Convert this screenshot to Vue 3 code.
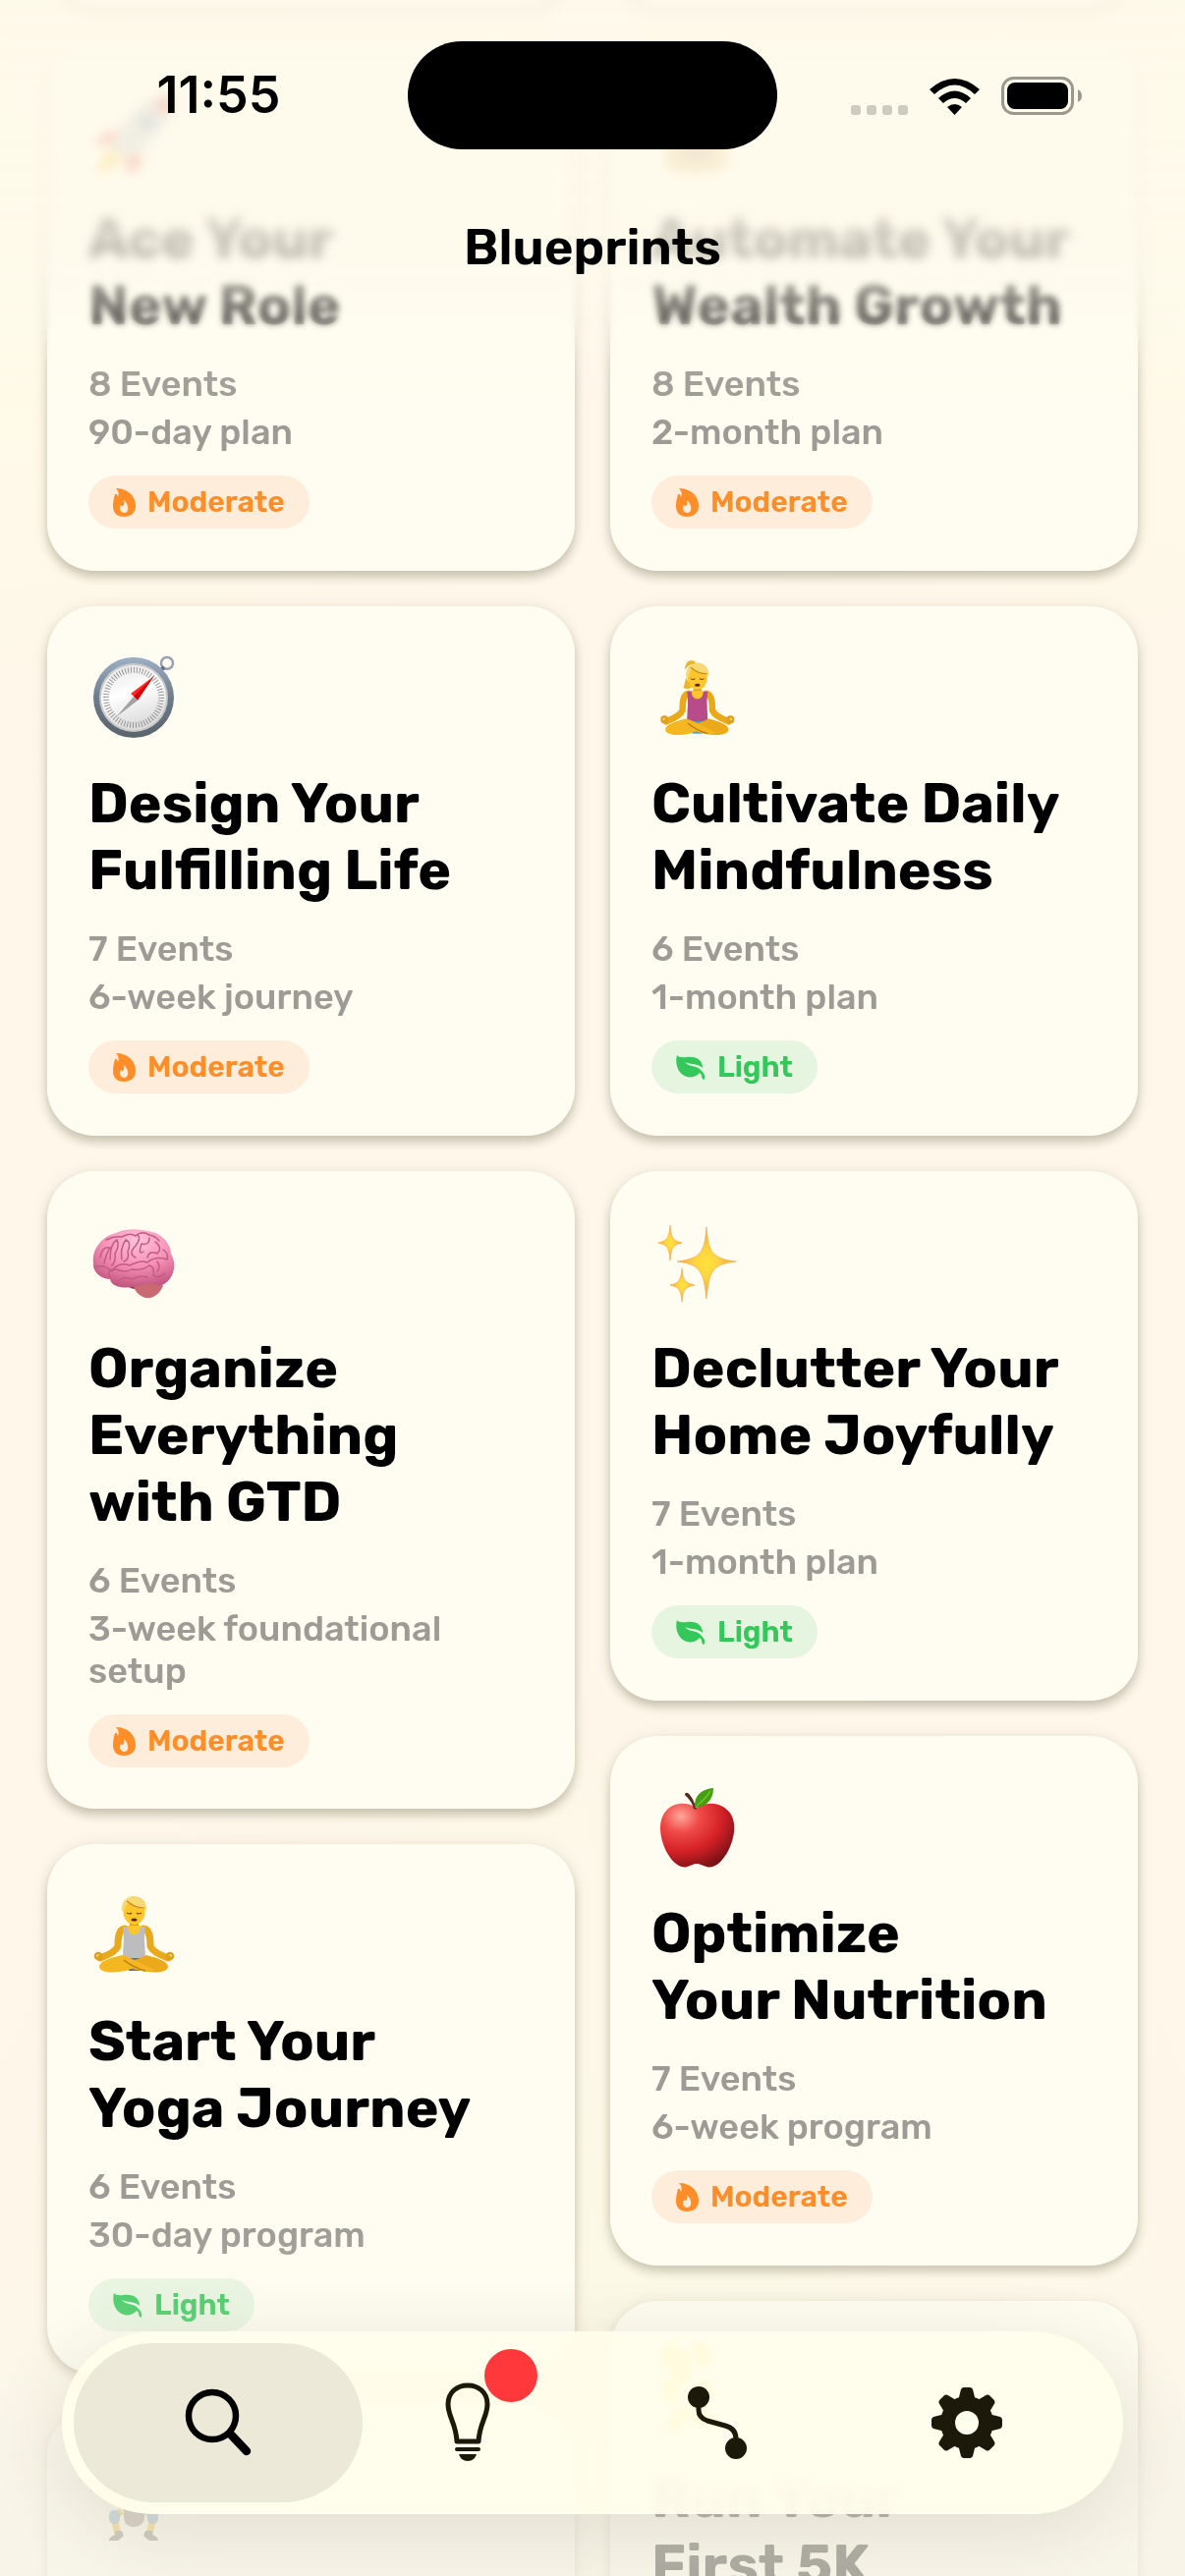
<template>
  <div class="screen">
    <main class="board">
      <div v-for="(column, columnIndex) in columns" :key="columnIndex" class="column">
        <div class="card card-past"></div>
        <article v-for="plan in column" :key="plan.emoji" class="card">
          <svg class="emoji" viewBox="0 0 102 102" aria-hidden="true">
            <!-- rocket -->
            <g v-if="plan.emoji === 'rocket'">
              <path d="M30 50 C16 48 10 56 8 64 L26 62Z M54 72 C56 84 48 90 40 93 L38 76Z" fill="#e8443a" />
              <path d="M30 66 C18 68 10 78 9 92 C22 91 34 84 36 72Z" fill="#fbc531" />
              <path d="M24 66 C30 40 54 16 86 13 C84 44 62 66 36 77Z" fill="#b9c2c9" />
              <path d="M64 21 C72 16 80 13 86 13 C86 20 84 27 80 35Z" fill="#d23b35" />
              <circle cx="60" cy="40" r="8" fill="#5b7f9b" />
            </g>

            <!-- money bag -->
            <g v-else-if="plan.emoji === 'moneybag'">
              <path d="M34 12 H58 L54 30 C70 42 82 70 76 84 Q72 92 46 92 Q18 92 15 84 C10 68 24 42 38 30Z" fill="#e2c078" />
              <path d="M34 30 H58 V36 H34Z" fill="#a9803f" />
              <circle cx="46" cy="66" r="15" fill="#b59a74" />
            </g>

            <!-- compass -->
            <g v-else-if="plan.emoji === 'compass'">
              <circle cx="80" cy="16" r="6" fill="none" stroke="#97a3b4" stroke-width="2.5" />
              <path d="M73 24 L77 20" stroke="#66717f" stroke-width="4" />
              <circle cx="46" cy="51" r="41" fill="url(#compassRim)" />
              <circle cx="46" cy="51" r="35" fill="#c9c9c9" />
              <circle cx="46" cy="51" r="33" fill="url(#compassFace)" />
              <circle cx="46" cy="51" r="28" fill="none" stroke="#8d8d8d" stroke-width="6" pathLength="240" stroke-dasharray="1.2 2.8" />
              <path d="M67 29 L43 47 L47 51Z" fill="#ff2a2a" />
              <path d="M67 29 L50 54 L46 50Z" fill="#d90000" />
              <path d="M28 71 L43 47 L47 51Z" fill="#f4f4f4" />
              <path d="M28 71 L50 54 L46 50Z" fill="#a3a3a3" />
            </g>

            <!-- lotus position, two hair styles -->
            <g
              v-else-if="plan.emoji === 'yoga-woman' || plan.emoji === 'yoga'"
              :transform="plan.emoji === 'yoga-woman' ? 'translate(4 5) scale(.92 .95)' : null"
            >
              <path d="M37 44 C30 45 30 55 30 62 C28 67 20 71 12 74" fill="none" stroke="#e8a91b" stroke-width="7" stroke-linecap="round" stroke-linejoin="round" />
              <path d="M56 44 C63 45 63 55 63 62 C65 67 73 71 81 74" fill="none" stroke="#e8a91b" stroke-width="7" stroke-linecap="round" stroke-linejoin="round" />
              <circle cx="10" cy="72" r="3" fill="none" stroke="#dfa01a" stroke-width="2.5" />
              <circle cx="83" cy="72" r="3" fill="none" stroke="#dfa01a" stroke-width="2.5" />
              <path d="M42 36 H51 V48 H42Z" fill="#e2a017" />
              <path d="M35 42 H58 C56 54 58 62 58 77 H35 C35 62 37 54 35 42Z" :fill="plan.emoji === 'yoga' ? '#bdbdbf' : '#b84c8b'" />
              <path d="M40 41 Q40 50 46.500 50 Q53 50 53 41Z" fill="#fcc62c" />
              <path d="M38 74 H55 L52 87 H41Z" :fill="plan.emoji === 'yoga' ? '#66717f' : '#45a3dc'" />
              <path d="M59 71 C70 74 81 77 81 83 C80 90 64 89 54 87 Q44 86 33 79 Q46 78 59 71Z" fill="#eca91a" />
              <path d="M34 71 C22 74 11 77 11 83 C12 90 28 89 38 87 L46 84 L60 88 L68 86 C56 82 46 74 34 71Z" fill="#f4b722" />
              <path d="M36 76 Q46 84 58 87" fill="none" stroke="#b97b10" stroke-width="1.500" />
              <ellipse cx="46.500" cy="27" rx="11" ry="13" fill="#fcc62c" />
              <path d="M34 26 C32 6 61 6 59 26 L57 24 Q48 24 41 16 Q38 20 36 27Z" fill="#f7d873" />
              <path d="M39 16 Q47 23 57 23" fill="none" stroke="#c98a1a" stroke-width="1.200" />
              <path d="M39 28 Q42 30 44 28 M49 28 Q51 30 54 28" fill="none" stroke="#7a4b0a" stroke-width="1.200" />
              <ellipse cx="46.500" cy="35" rx="3" ry="1.600" fill="#5e2710" />
              <path v-if="plan.emoji === 'yoga-woman'" d="M44 10 C37 6 32 12 33 19 Q36 12 44 12Z M34 27 Q32 34 31 38 Q37 41 40 37Z" fill="#e9b62f" />
            </g>

            <!-- brain -->
            <g v-else-if="plan.emoji === 'brain'">
              <path d="M38 73 Q44 80 50 77 L56 72Z" fill="#8d3f3f" />
              <path d="M46 76 C50 70 70 68 76 75 C72 84 65 88 58 87 C52 85 48 81 46 76Z" fill="#c96a72" />
              <path d="M5 51 C3 38 14 24 28 21 C38 16 52 17 60 19 C74 20 84 32 84 42 C91 54 86 69 75 74 C68 75 62 71 56 73 C45 78 24 79 22 68 C14 68 4 62 5 51Z" fill="url(#brainFill)" />
              <g fill="none" stroke="#c25c85" stroke-width="1.500" stroke-linecap="round">
                <path d="M6 56 Q16 52 24 60 Q30 50 42 54 Q54 48 60 51 Q68 44 80 48" />
                <path d="M22 66 Q18 58 28 58 Q38 62 44 58 Q54 60 62 54 Q68 56 66 64 Q72 68 78 62" />
                <path d="M12 46 Q14 34 22 36 Q18 42 16 52 M22 48 Q22 32 29 28 Q32 34 27 42 Q28 50 24 54" />
                <path d="M34 48 Q32 36 38 28 Q44 30 40 40 Q42 48 36 50 M48 46 Q40 42 48 34 Q54 26 50 23" />
                <path d="M56 40 Q50 44 54 32 Q62 34 62 26 M60 46 Q62 38 70 42 Q76 36 68 30 M76 38 Q82 42 80 48" />
                <path d="M18 28 Q26 24 34 25 Q42 20 48 24 Q54 18 62 23 Q68 24 72 29" />
                <path d="M30 70 Q36 64 44 68 Q52 64 60 66 M70 50 Q74 56 70 60" />
              </g>
            </g>

            <!-- sparkles -->
            <g v-else-if="plan.emoji === 'sparkles'" fill="url(#sparkFill)" stroke="#f8a94a" stroke-width="0.700">
              <path d="M56 15 C58 40 61 47 86 50 C61 53 59 60 56 88 C53 60 50 53 26 50 C51 47 54 40 56 15Z" />
              <path d="M19 13 C20 26 22 29 31 31 C22 33 20 36 19 49 C18 36 16 33 7 31 C16 29 18 26 19 13Z" />
              <path d="M31 57 C32 69 34 72 44 74 C34 76 32 79 31 91 C30 79 28 76 19 74 C28 72 30 69 31 57Z" />
            </g>

            <!-- apple -->
            <g v-else-if="plan.emoji === 'apple'">
              <path d="M46 31 C36 25 23 25 15 34 C6 44 8 62 16 77 C21 86 28 92 35 91.500 C40 90 43 88 46 88 C49 88 52 90 58 91.500 C66 92 72 85 77 77 C86 61 87 43 78 34 C69 25 56 25 46 31Z" fill="url(#appleFill)" />
              <path d="M34 18 C34 15 37 15 39 18 C43 23 44 27 46 33 L43 32 C42 27 39 23 36 20Z" fill="#57291d" />
              <path d="M44 31 C43 18 52 12 63 11 C63 23 56 30 44 31Z" fill="#459d12" />
              <path d="M46 29 Q54 23 60 14" fill="none" stroke="#6fc22c" stroke-width="1.500" />
            </g>

            <!-- weight lifter -->
            <g v-else-if="plan.emoji === 'lifter'">
              <rect x="2" y="16" width="7" height="26" rx="3" fill="#777" />
              <rect x="84" y="16" width="7" height="26" rx="3" fill="#777" />
              <path d="M4 29 H90" stroke="#999" stroke-width="3" />
              <path d="M34 46 L20 30 M58 46 L72 30" stroke="#f0b11e" stroke-width="7" stroke-linecap="round" />
              <circle cx="46" cy="34" r="10" fill="#f7c12b" />
              <path d="M34 44 H58 L56 64 H36Z" fill="#7c8a95" />
              <path d="M34 62 L26 68 L30 86 M58 62 L66 68 L62 86" fill="none" stroke="#f0b11e" stroke-width="7" />
              <path d="M36 60 H57 V70 Q54 78 46 78 Q38 78 36 70Z" fill="#817c70" />
              <rect x="21" y="61" width="11" height="14" rx="5" fill="#6498bb" />
              <rect x="60" y="61" width="11" height="14" rx="5" fill="#6498bb" />
              <path d="M27 82 H34 L36 87 L30 92 H21 Q21 88 27 86Z M65 82 H58 L56 87 L62 92 H71 Q71 88 65 86Z" fill="#62625e" />
            </g>

            <!-- runner -->
            <g v-else>
              <path d="M25 14 H37 L35 40 H23Z" fill="#f9b800" />
              <path d="M16 18 L22 8 M50 8 L54 18 M16 46 L22 54 M50 54 L54 46" fill="none" stroke="#f6b000" stroke-width="8" stroke-linecap="round" />
              <path d="M30 72 L22 86 M44 72 L60 82" stroke="#f6b000" stroke-width="8" stroke-linecap="round" />
            </g>
          </svg>

          <h2 v-if="plan.title" class="card-title">{{ plan.title }}</h2>
          <div v-if="plan.events" class="meta">
            <p>{{ plan.events }} Events</p>
            <p>{{ plan.duration }}</p>
          </div>
          <span v-if="plan.level" class="level" :class="plan.level.toLowerCase()">
            <svg v-if="plan.level === 'Moderate'" class="flame" viewBox="0 0 23 29" aria-hidden="true">
              <path
                fill="currentColor"
                fill-rule="evenodd"
                d="M3 0 C15 0 23 8 23 18 C23 25 18 29 11 29 C4 29 0 25 0 18 C0 13 1 10 2 6 Q4 5 5 9 Q7 4 3 0Z M11 12 Q12 16 10 18 Q8 18 8 17 C6 20 7 25 12 25 C17 24 16 16 11 12Z"
              />
            </svg>
            <svg v-else class="leaf" viewBox="0 0 30 25" aria-hidden="true">
              <path d="M1 0 Q3 3 11 2 C22 1 27 6 27 13 C22 8 16 10 9 7 C14 13 20 9 26 16 C30 20 30 24 28 25 Q26 24 26 20 L24 18 C20 23 12 24 7 20 C1 16 -1 7 1 0Z" fill="currentColor" />
            </svg>
            {{ plan.level }}
          </span>
        </article>
      </div>
    </main>

    <header class="top">
      <div class="haze haze-wide"></div>
      <div class="haze haze-near"></div>
      <div class="veil"></div>
      <div class="status">
        <span class="time">11:55</span>
        <span class="island"></span>
        <span class="signals">
          <svg class="dots" viewBox="0 0 58 10" aria-hidden="true">
            <rect v-for="n in 4" :key="n" :x="(n - 1) * 16" width="10" height="10" rx="3" />
          </svg>
          <svg class="wifi" viewBox="0 0 51 37" aria-hidden="true">
            <path d="M0 11 Q25.500 -11 51 11 L46 16 Q25.500 -3 5 16Z M9 20 Q25.500 5 42 20 L37 25 Q25.500 15 14 25Z M18 29 Q25.500 23 33 29 L25.500 37Z" />
          </svg>
          <svg class="battery" viewBox="0 0 82 39" aria-hidden="true">
            <rect x="1.500" y="1.500" width="71" height="36" rx="11" fill="none" stroke="#9b998e" stroke-width="3" />
            <rect x="6" y="6" width="62" height="27" rx="8" />
            <path d="M78 13 Q82 15 82 19.500 Q82 24 78 26Z" fill="#9b998e" />
          </svg>
        </span>
      </div>
      <h1 class="page-title">Blueprints</h1>
    </header>

    <div class="bottom-veil"></div>
    <nav class="tabs">
      <button
        v-for="tab in tabs"
        :key="tab"
        type="button"
        class="tab"
        :class="{ active: tab === activeTab }"
        :aria-label="tab"
        @click="activeTab = tab"
      >
        <svg v-if="tab === 'Discover'" viewBox="0 0 84 84" aria-hidden="true">
          <circle cx="36" cy="35" r="24" fill="none" stroke="#000" stroke-width="6.500" />
          <path d="M54 53 L71 71" stroke="#000" stroke-width="8.500" stroke-linecap="round" />
        </svg>
        <svg v-else-if="tab === 'Ideas'" viewBox="0 0 84 84" aria-hidden="true">
          <path d="M31 61 C30 42 22 36 22 23 C22 11 31 4 42 4 C53 4 62 11 62 23 C62 36 54 42 53 61Z" fill="none" stroke="#1c190b" stroke-width="5" stroke-linejoin="round" />
          <path d="M31 69 H53" stroke="#1c190b" stroke-width="4" stroke-linecap="round" />
          <path d="M33 74 H51 Q49 81 42 81 Q35 81 33 74Z" fill="#1c190b" />
        </svg>
        <svg v-else-if="tab === 'Journey'" viewBox="0 0 84 84" aria-hidden="true">
          <circle cx="23" cy="16" r="11" fill="#1c190b" />
          <circle cx="61" cy="68" r="11" fill="#1c190b" />
          <path d="M23 26 V29 Q23 37 32 40 L50 45 Q61 48 61 58" fill="none" stroke="#1c190b" stroke-width="5" />
        </svg>
        <svg v-else viewBox="0 0 84 84" aria-hidden="true">
          <mask id="gearHole">
            <rect width="84" height="84" fill="#fff" />
            <circle cx="42" cy="42" r="12" fill="#000" />
          </mask>
          <g fill="#1c190b" mask="url(#gearHole)">
            <circle cx="42" cy="42" r="27" />
            <path
              v-for="n in 8"
              :key="n"
              d="M33 20 L36 8 Q37 6 39 6 H45 Q47 6 48 8 L51 20Z"
              :transform="`rotate(${n * 45} 42 42)`"
            />
          </g>
        </svg>
        <span v-if="tab === 'Ideas'" class="dot"></span>
      </button>
    </nav>

    <svg class="defs" aria-hidden="true">
      <linearGradient id="compassRim" x1="0" y1="0" x2="0" y2="1">
        <stop offset="0" stop-color="#9db0c6" />
        <stop offset="0.500" stop-color="#6d7b8c" />
        <stop offset="1" stop-color="#5b636d" />
      </linearGradient>
      <linearGradient id="compassFace" x1="0" y1="0" x2="0.300" y2="1">
        <stop offset="0" stop-color="#e4e4e4" />
        <stop offset="0.500" stop-color="#fff" />
        <stop offset="1" stop-color="#dcdcdc" />
      </linearGradient>
      <radialGradient id="brainFill" cx="0.550" cy="0.200" r="0.800">
        <stop offset="0" stop-color="#ffc4d9" />
        <stop offset="0.550" stop-color="#f58fb3" />
        <stop offset="1" stop-color="#c2557f" />
      </radialGradient>
      <radialGradient id="sparkFill">
        <stop offset="0" stop-color="#ffe23a" />
        <stop offset="0.400" stop-color="#fdd442" />
        <stop offset="1" stop-color="#f9a13c" />
      </radialGradient>
      <radialGradient id="appleFill" cx="0.280" cy="0.200" r="0.850">
        <stop offset="0" stop-color="#ffa79c" />
        <stop offset="0.300" stop-color="#f04a47" />
        <stop offset="0.650" stop-color="#d42127" />
        <stop offset="1" stop-color="#7d1216" />
      </radialGradient>
    </svg>
  </div>
</template>

<script setup>
import { ref } from 'vue'

const activeTab = ref('Discover')
const tabs = ['Discover', 'Ideas', 'Journey', 'Settings']

const columns = [
  [
    { emoji: 'rocket', title: 'Ace Your\nNew Role', events: 8, duration: '90-day plan', level: 'Moderate' },
    { emoji: 'compass', title: 'Design Your\nFulfilling Life', events: 7, duration: '6-week journey', level: 'Moderate' },
    { emoji: 'brain', title: 'Organize\nEverything\nwith GTD', events: 6, duration: '3-week foundational setup', level: 'Moderate' },
    { emoji: 'yoga', title: 'Start Your\nYoga Journey', events: 6, duration: '30-day program', level: 'Light' },
    { emoji: 'lifter' }
  ],
  [
    { emoji: 'moneybag', title: 'Automate Your\nWealth Growth', events: 8, duration: '2-month plan', level: 'Moderate' },
    { emoji: 'yoga-woman', title: 'Cultivate Daily\nMindfulness', events: 6, duration: '1-month plan', level: 'Light' },
    { emoji: 'sparkles', title: 'Declutter Your\nHome Joyfully', events: 7, duration: '1-month plan', level: 'Light' },
    { emoji: 'apple', title: 'Optimize\nYour Nutrition', events: 7, duration: '6-week program', level: 'Moderate' },
    { emoji: 'runner', title: 'Run Your\nFirst 5K' }
  ]
]
</script>

<style>
body {
  margin: 0;
}
</style>

<style scoped>
.screen {
  position: relative;
  height: 100vh;
  overflow: hidden;
  font-family: Rubik, Inter, "Liberation Sans", sans-serif;
  color: #000;
  background:
    radial-gradient(circle at 0% 6%, #fffbe7, transparent 24%),
    radial-gradient(circle at 100% 4%, #fffbe7, transparent 24%),
    radial-gradient(circle at 50% 90%, #fcf9e6, transparent 30%),
    #fef7ea;
}

h1, h2, p { margin: 0; }

/* ── Cards ───────────────────────────────────────── */
.board {
  display: grid;
  grid-template-columns: 1fr 1fr;
  gap: 36px;
  padding: 0 48px;
}

.column {
  display: flex;
  flex-direction: column;
  gap: 36px;
}

.card {
  box-sizing: border-box;
  min-height: 539px;
  padding: 42px;
  border-radius: 48px;
  background: #fffdf1;
  box-shadow: 0 6px 10px rgba(60, 55, 25, 0.24), 0 1px 18px rgba(60, 55, 25, 0.08);
}

/* tail of the row that has scrolled off the top */
.card-past {
  min-height: 0;
  height: 120px;
  margin-top: -114px;
}

.emoji {
  display: block;
  width: 102px;
  height: 102px;
}

.card-title {
  margin-top: 23px;
  font-size: 57px;
  line-height: 68px;
  font-weight: 700;
  white-space: pre-line;
}

.meta {
  display: flex;
  flex-direction: column;
  gap: 6px;
  margin-top: 24px;
  font-size: 36px;
  line-height: 43px;
  font-weight: 500;
  color: #9c9b95;
}

.level {
  display: inline-flex;
  align-items: center;
  gap: 12px;
  height: 54px;
  margin-top: 23px;
  padding: 0 25px;
  border-radius: 27px;
  font-size: 30px;
  line-height: 36px;
  font-weight: 600;
}
.level.moderate { color: #ff8d28; background: #ffeddb; }
.level.light { color: #34c759; background: #e6f5e0; }
.flame { width: 23px; height: 29px; }
.leaf { width: 30px; height: 25px; }

/* ── Top bar ─────────────────────────────────────── */
.top {
  position: absolute;
  top: 0;
  left: 0;
  right: 0;
  padding-top: 42px;
  height: 378px;
}

.haze, .veil {
  position: absolute;
  inset: 0;
}
.haze-wide {
  backdrop-filter: blur(4px);
  mask-image: linear-gradient(#000 62%, transparent 72%);
}
.haze-near {
  backdrop-filter: blur(3px);
  mask-image: linear-gradient(#000 76%, transparent 88%);
}
.veil {
  background: linear-gradient(
    rgba(254, 249, 234, 0.84) 0%,
    rgba(254, 249, 234, 0.8) 56%,
    rgba(254, 250, 236, 0.66) 67%,
    rgba(255, 251, 238, 0.38) 79%,
    rgba(255, 253, 241, 0.08) 90%,
    rgba(255, 253, 241, 0) 100%
  );
}

.status {
  position: relative;
  display: grid;
  grid-template-columns: 1fr 376px 1fr;
  align-items: center;
  justify-items: center;
  padding: 0 30px;
}
.time {
  font-family: Inter, sans-serif;
  font-size: 52px;
  line-height: 60px;
  font-weight: 600;
}
.island {
  width: 376px;
  height: 110px;
  border-radius: 55px;
  background: #000;
}
.signals {
  display: flex;
  align-items: flex-end;
  gap: 22px;
}
.dots { width: 58px; height: 10px; fill: #cfccbf; }
.wifi { width: 51px; height: 37px; }
.battery { width: 82px; height: 39px; }

.page-title {
  position: relative;
  margin-top: 70px;
  font-size: 51px;
  line-height: 60px;
  font-weight: 600;
  text-align: center;
}

/* ── Tab bar ─────────────────────────────────────── */
.bottom-veil {
  position: absolute;
  left: 0;
  right: 0;
  bottom: 0;
  height: 360px;
  background: linear-gradient(
    rgba(250, 248, 232, 0) 0%,
    rgba(250, 247, 233, 0.2) 25%,
    rgba(247, 244, 231, 0.78) 70%,
    rgba(246, 243, 230, 0.7) 100%
  );
}

.tabs {
  position: absolute;
  left: 63px;
  right: 63px;
  bottom: 63px;
  display: flex;
  padding: 12px;
  border-radius: 93px;
  background: rgba(255, 253, 239, 0.93);
  backdrop-filter: blur(5px) saturate(5);
  box-shadow: 0 20px 80px rgba(70, 60, 40, 0.12);
}

.tab {
  position: relative;
  flex: 1;
  display: flex;
  align-items: center;
  justify-content: center;
  height: 162px;
  padding: 0;
  border: none;
  border-radius: 81px;
  background: none;
  cursor: pointer;
}
.tab + .tab { margin-left: -40px; }
.tab.active { background: #ece9d8; }
.tab svg { width: 84px; height: 84px; }

.dot {
  position: absolute;
  top: 6px;
  left: calc(50% + 17px);
  width: 54px;
  height: 54px;
  border-radius: 50%;
  background: #ff383c;
}

.defs {
  position: absolute;
  width: 0;
  height: 0;
}
</style>
